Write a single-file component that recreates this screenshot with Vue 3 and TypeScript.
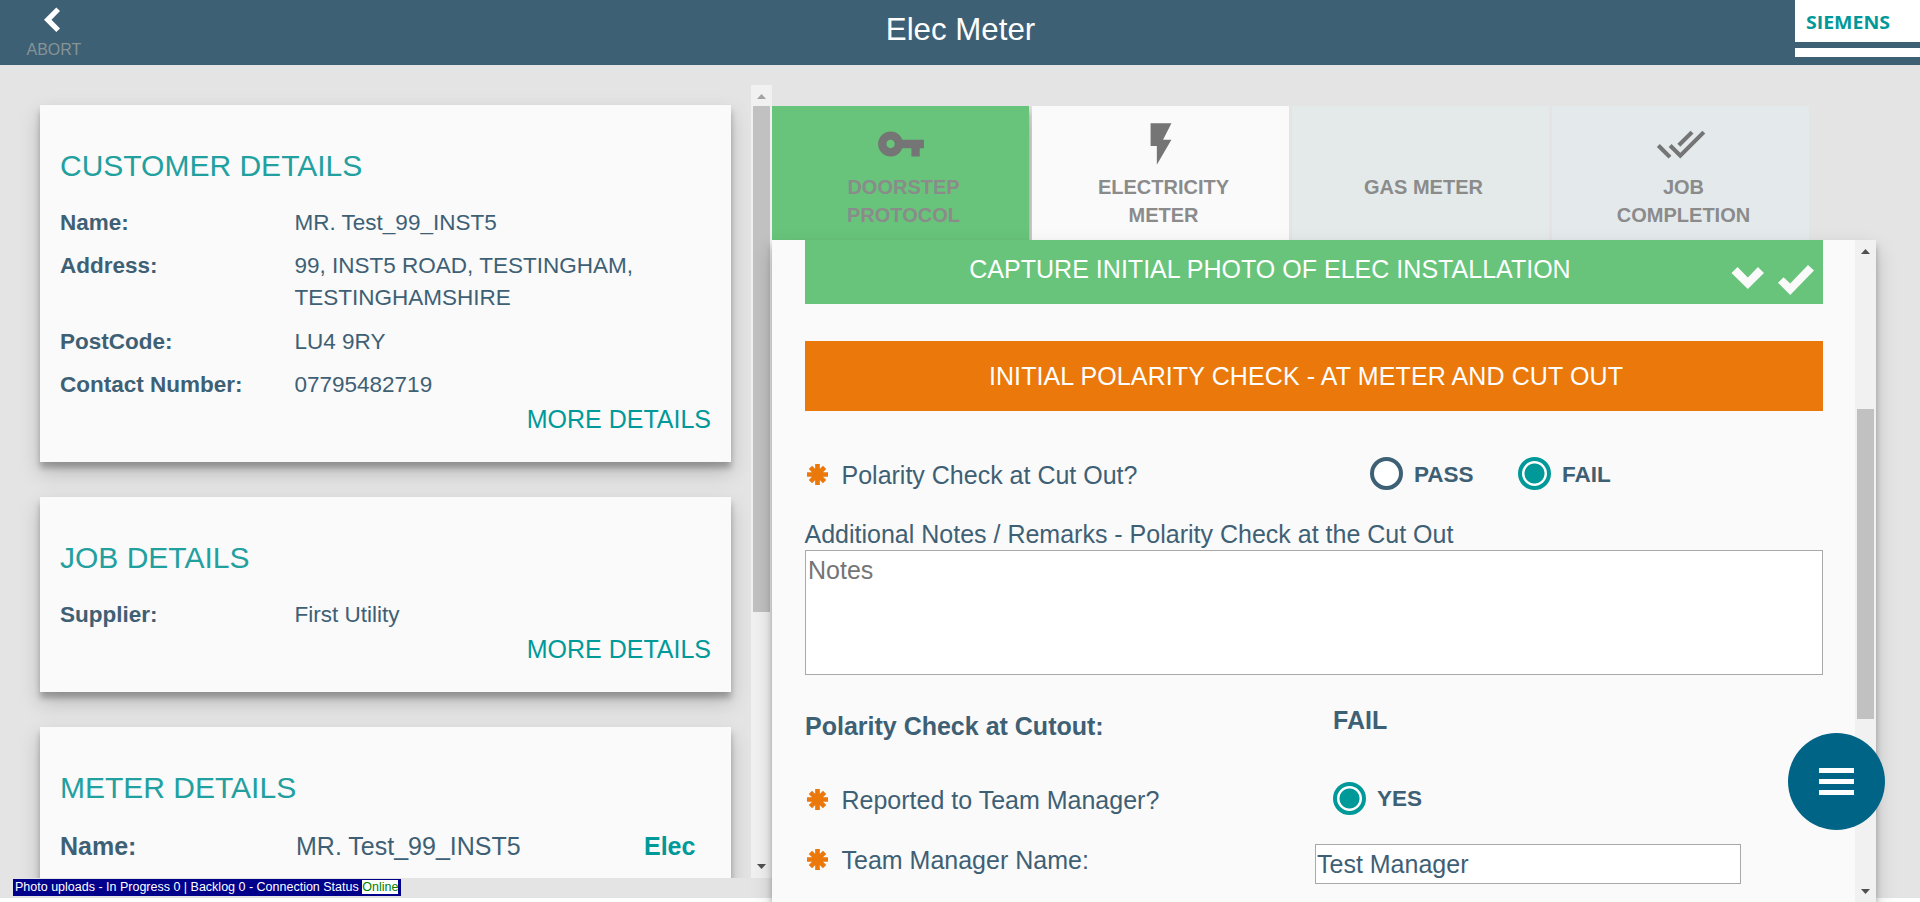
<script setup lang="ts">
interface Field {
  label: string
  lines: string[]
}

interface DetailCard {
  title: string
  fields: Field[]
}

interface Tab {
  label: string[]
  state: 'done' | 'active' | 'gas' | 'final'
  icon: string
}

const cards: DetailCard[] = [
  {
    title: 'CUSTOMER DETAILS',
    fields: [
      { label: 'Name:', lines: ['MR. Test_99_INST5'] },
      { label: 'Address:', lines: ['99, INST5 ROAD, TESTINGHAM,', 'TESTINGHAMSHIRE'] },
      { label: 'PostCode:', lines: ['LU4 9RY'] },
      { label: 'Contact Number:', lines: ['07795482719'] },
    ],
  },
  {
    title: 'JOB DETAILS',
    fields: [{ label: 'Supplier:', lines: ['First Utility'] }],
  },
]

const tabs: Tab[] = [
  {
    label: ['DOORSTEP', 'PROTOCOL'],
    state: 'done',
    icon: 'M12.65 10C11.83 7.67 9.61 6 7 6c-3.31 0-6 2.69-6 6s2.69 6 6 6c2.61 0 4.83-1.67 5.65-4H17v4h4v-4h2v-4H12.65zM7 14c-1.1 0-2-.9-2-2s.9-2 2-2 2 .9 2 2-.9 2-2 2z',
  },
  {
    label: ['ELECTRICITY', 'METER'],
    state: 'active',
    icon: 'M7 2v11h3v9l7-12h-4l4-8z',
  },
  { label: ['GAS METER'], state: 'gas', icon: '' },
  {
    label: ['JOB', 'COMPLETION'],
    state: 'final',
    icon: 'M18 7l-1.41-1.41-6.34 6.34 1.41 1.41L18 7zm4.24-1.41L11.66 16.17 7.48 12l-1.41 1.41L11.66 19l12-12-1.42-1.41zM.41 13.41L6 19l1.41-1.41L1.83 12 .41 13.41z',
  },
]

const required = 'M10.5 0v21M0 10.5h21M3.4 3.4l14.2 14.2M17.6 3.4L3.4 17.6'
</script>

<template>
  <div class="app">
    <header class="header">
      <button class="abort" type="button">
        <svg width="18" height="26" viewBox="0 0 18 26">
          <path d="M1 12.8L13.3.6 17 4.1 8.5 12.8l8.5 8.7-3.7 3.5z" fill="#fff" />
        </svg>
        <span>ABORT</span>
      </button>
      <h1>Elec Meter</h1>
      <div class="logo">
        <div class="logo-name">
          <svg width="125" height="42" viewBox="0 0 125 42">
            <text x="11" y="29.3" textLength="84" lengthAdjust="spacingAndGlyphs">SIEMENS</text>
          </svg>
        </div>
        <div class="logo-strip"></div>
      </div>
    </header>

    <main class="main">
      <aside class="side">
        <div class="cards">
          <section v-for="card in cards" :key="card.title" class="card">
            <h2>{{ card.title }}</h2>
            <dl>
              <div v-for="f in card.fields" :key="f.label" class="field">
                <dt>{{ f.label }}</dt>
                <dd><div v-for="l in f.lines" :key="l">{{ l }}</div></dd>
              </div>
            </dl>
            <a class="more">MORE DETAILS</a>
          </section>
          <section class="card meter">
            <h2>METER DETAILS</h2>
            <div class="meter-row">
              <b>Name:</b>
              <span>MR. Test_99_INST5</span>
              <strong>Elec</strong>
            </div>
          </section>
        </div>
        <div class="scroll side-scroll">
          <svg class="arrow muted" width="9" height="5"><path d="M0 5L4.5 0 9 5z" /></svg>
          <div class="thumb"></div>
          <svg class="arrow" width="9" height="5"><path d="M0 0h9L4.5 5z" /></svg>
        </div>
      </aside>

      <div class="work">
        <nav class="tabs">
          <div v-for="t in tabs" :key="t.state" class="tab" :class="t.state">
            <svg width="50" height="50" viewBox="0 0 24 24"><path v-if="t.icon" :d="t.icon" /></svg>
            <div class="tab-label"><div v-for="l in t.label" :key="l">{{ l }}</div></div>
          </div>
        </nav>

        <section class="panel">
          <div class="form">
            <div class="bar green">
              <span>CAPTURE INITIAL PHOTO OF ELEC INSTALLATION</span>
              <svg width="88" height="70" viewBox="0 0 88 70">
                <path d="M-3.5 39l6-6 10.3 10.4L23 33l6 6-16.2 16z" fill="#fafafa" />
                <path d="M43 48.8l5.6-5.6 6.6 6.4L73 31l6 5.6L55.2 61z" fill="#fafafa" />
              </svg>
            </div>
            <div class="bar orange"><span>INITIAL POLARITY CHECK - AT METER AND CUT OUT</span></div>

            <div class="row first">
              <div class="question">
                <svg width="21" height="21"><path :d="required" /></svg>
                <span>Polarity Check at Cut Out?</span>
              </div>
              <label class="option"><i class="radio"></i>PASS</label>
              <label class="option"><i class="radio on"></i>FAIL</label>
            </div>

            <label class="notes-label">Additional Notes / Remarks - Polarity Check at the Cut Out</label>
            <textarea class="notes" placeholder="Notes"></textarea>

            <div class="row summary">
              <b>Polarity Check at Cutout:</b>
              <strong>FAIL</strong>
            </div>

            <div class="row reported">
              <div class="question">
                <svg width="21" height="21"><path :d="required" /></svg>
                <span>Reported to Team Manager?</span>
              </div>
              <label class="option"><i class="radio on"></i>YES</label>
            </div>

            <div class="row manager">
              <div class="question">
                <svg width="21" height="21"><path :d="required" /></svg>
                <span>Team Manager Name:</span>
              </div>
              <input class="name-input" type="text" value="Test Manager" />
            </div>
          </div>
          <div class="scroll panel-scroll">
            <svg class="arrow" width="9" height="5"><path d="M0 5L4.5 0 9 5z" /></svg>
            <div class="thumb"></div>
            <svg class="arrow" width="9" height="5"><path d="M0 0h9L4.5 5z" /></svg>
          </div>
        </section>
      </div>
    </main>

    <button class="fab" type="button">
      <span></span><span></span><span></span>
    </button>

    <div class="status">
      Photo uploads - In Progress 0 | Backlog 0 - Connection Status <span>Online</span>
    </div>
  </div>
</template>

<style>
body {
  margin: 0;
  background: #fff;
}
</style>

<style scoped>
* {
  box-sizing: border-box;
}

.app {
  position: relative;
  width: 1920px;
  height: 902px;
  overflow: hidden;
  background: #fff;
  color: #3e6075;
  font: 25px/36px 'Liberation Sans', Arial, sans-serif;
}

button {
  border: 0;
  padding: 0;
  background: none;
  font: inherit;
}

.header {
  display: grid;
  grid-template-columns: 125px 1fr 125px;
  height: 65px;
  background: #3e6075;
}

.abort {
  display: flex;
  flex-direction: column;
  align-items: flex-start;
  padding: 7px 0 0 26.5px;
  color: #869495;
  font-size: 16px;
  line-height: 18px;
}

.abort svg {
  margin: 0 0 8px 16.5px;
}

h1 {
  margin: 10px 0 0 1px;
  color: #fff;
  font-size: 31.25px;
  font-weight: 400;
  line-height: 40px;
  text-align: center;
}

.logo-name {
  height: 42px;
  background: #fff;
}

.logo-name svg {
  display: block;
}

.logo-name text {
  fill: #009999;
  font: 700 17.6px 'Open Sans', 'Noto Sans', sans-serif;
}

.logo-strip {
  height: 9px;
  margin-top: 6px;
  background: #fff;
}

.main {
  display: flex;
  height: 833px;
  background: #e4e4e4;
}

.side {
  display: flex;
  flex: none;
  width: 772px;
  height: 793px;
  margin-top: 20px;
  overflow: hidden;
}

.cards {
  display: flex;
  flex-direction: column;
  flex: 1;
  gap: 35px;
  padding: 20px 20px 0 40px;
}

.card {
  flex: none;
  display: flex;
  flex-direction: column;
  padding: 39px 20px 25px;
  background: #fafafa;
  box-shadow: 0 10px 20px rgba(0, 0, 0, 0.19), 0 6px 6px rgba(0, 0, 0, 0.25);
}

h2 {
  margin: 0;
  color: #22a0a0;
  font-size: 30px;
  font-weight: 400;
  line-height: 43px;
}

dl {
  margin: 8.6px 0 0;
  font-size: 22.5px;
  line-height: 32.1px;
}

.field {
  display: flex;
  padding-top: 11.25px;
}

dt {
  width: 234.5px;
  font-weight: 700;
}

dd {
  margin: 0;
}

.more {
  align-self: flex-end;
  color: #009999;
}

.meter {
  height: 300px;
}

.meter-row {
  display: grid;
  grid-template-columns: 236px 348px auto;
  margin-top: 19px;
}

.meter-row strong {
  color: #009999;
}

.scroll {
  display: flex;
  flex: none;
  flex-direction: column;
  align-items: center;
  width: 21px;
  background: #f1f1f1;
}

.thumb {
  width: 17px;
  background: #c1c1c1;
}

.arrow {
  display: block;
  fill: #505050;
}

.arrow.muted {
  fill: #a3a3a3;
}

.arrow:last-child {
  margin-top: auto;
}

.side-scroll {
  padding: 9px 0;
}

.side-scroll .thumb {
  height: 506px;
  margin-top: 7px;
}

.work {
  flex: 1;
  padding-top: 41px;
}

.tabs {
  display: flex;
  gap: 3px;
  height: 134px;
  overflow: hidden;
}

.tab {
  display: flex;
  flex-direction: column;
  align-items: center;
  width: 257px;
  padding-top: 13px;
}

.tab svg {
  flex: none;
  fill: #757575;
}

.tab.done {
  background: #68c47a;
  box-shadow: 0 10px 20px rgba(0, 0, 0, 0.19), 0 6px 6px rgba(0, 0, 0, 0.25);
}

.tab.active {
  position: relative;
  background: #fafafa;
}

.tab.gas {
  background: #e4eaea;
}

.tab.final {
  background: #e4eaec;
}

.tab-label {
  margin-top: 4px;
  padding-left: 6px;
  color: #8b8b8b;
  font-size: 20px;
  font-weight: 700;
  line-height: 28px;
  text-align: center;
}

.panel {
  position: relative;
  display: flex;
  width: 1104px;
  height: 662px;
  background: #fafafa;
  box-shadow: 0 10px 20px rgba(0, 0, 0, 0.19), 0 6px 6px rgba(0, 0, 0, 0.25);
}

.form {
  flex: 1;
  padding: 0 32px 0 33px;
  overflow: hidden;
}

.bar {
  display: flex;
  height: 70px;
  color: #fff;
  line-height: 71px;
  text-align: center;
}

.bar span {
  flex: 1;
}

.bar svg {
  overflow: visible;
}

.green {
  margin-top: -6px;
  background: #68c47a;
  letter-spacing: 0.02px;
}

.orange {
  margin-top: 37px;
  padding-right: 16px;
  background: #eb780a;
  letter-spacing: 0.11px;
}

.row {
  display: flex;
  align-items: flex-start;
  height: 36px;
}

.first {
  margin-top: 46px;
}

.question {
  display: flex;
  flex: none;
  gap: 14px;
}

.question svg {
  margin: 7px 0 0 1.5px;
  stroke: #eb780a;
  stroke-width: 4.7;
}

.first .question {
  width: 565px;
}

.reported .question {
  width: 528px;
}

.manager .question {
  width: 510px;
}

.option {
  display: flex;
  gap: 11px;
  width: 148px;
  font-size: 22.5px;
  font-weight: 700;
  line-height: 35px;
}

.reported .option {
  line-height: 34px;
}

.radio {
  flex: none;
  width: 33px;
  height: 33px;
  border: 4px solid #3e6075;
  border-radius: 50%;
  background: #fff;
}

.radio.on {
  border-color: #009999;
  background: radial-gradient(circle, #009999 9.6px, #fff 10.4px);
}

.reported .radio {
  margin-top: -0.5px;
}

.notes-label {
  display: block;
  height: 34px;
  margin: 23px 0 0 -0.5px;
}

.notes {
  display: block;
  width: 100%;
  height: 125px;
  margin: 0;
  padding: 2px;
  border: 1px solid #a9a9a9;
  border-radius: 0;
  background: #fff;
  color: #3e6075;
  font: inherit;
  line-height: 35px;
  resize: none;
  outline: 0;
}

.notes::placeholder {
  color: #757575;
}

.summary {
  height: 46px;
  margin-top: 27px;
}

.summary b {
  width: 528px;
  padding-top: 6px;
}

.reported {
  margin-top: 34px;
}

.manager {
  margin-top: 24px;
}

.name-input {
  width: 426px;
  height: 40px;
  margin: 2px 0 0;
  padding: 0 1px;
  border: 1px solid #a9a9a9;
  border-radius: 0;
  background: #fff;
  color: #3e6075;
  font: inherit;
  outline: 0;
}

.panel-scroll {
  padding: 9px 0 8px;
}

.panel-scroll .thumb {
  height: 310px;
  margin-top: 155px;
}

.fab {
  position: absolute;
  left: 1788px;
  top: 733px;
  display: flex;
  flex-direction: column;
  align-items: center;
  justify-content: center;
  gap: 6.5px;
  width: 97px;
  height: 97px;
  border-radius: 50%;
  background: #006487;
}

.fab span {
  width: 35px;
  height: 4.5px;
  background: #fff;
}

.status {
  position: absolute;
  left: 13px;
  top: 879px;
  width: 388px;
  height: 17px;
  padding: 1px 2px;
  background: #00008b;
  color: #fff;
  font-size: 12.5px;
  line-height: 14px;
  white-space: nowrap;
}

.status span {
  display: inline-block;
  background: #fff;
  color: #008000;
}
</style>
